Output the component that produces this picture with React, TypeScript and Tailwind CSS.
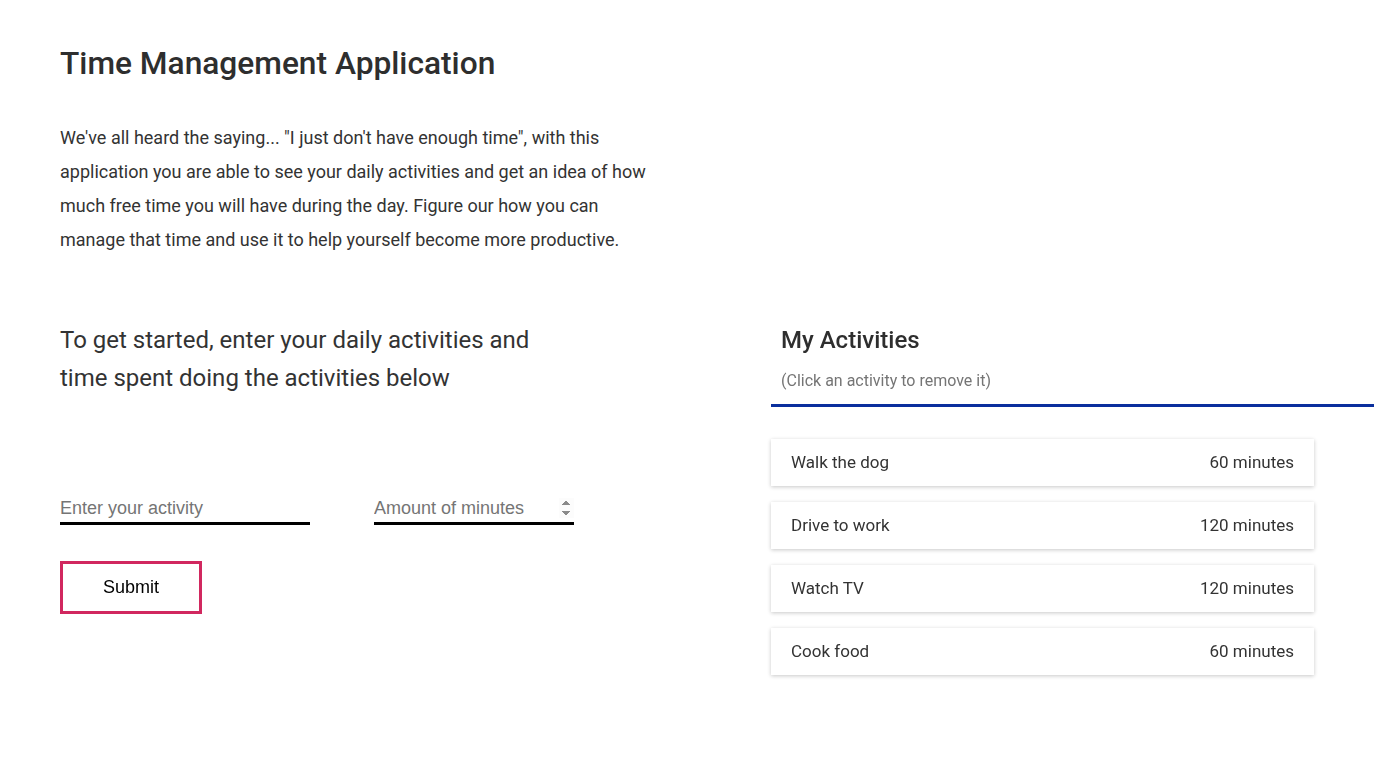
import React, { useState } from "react";

// ── Data ───────────────────────────────────────────────────────────────────────

type Activity = { name: string; minutes: number };

const INITIAL_ACTIVITIES: Activity[] = [
  { name: "Walk the dog", minutes: 60 },
  { name: "Drive to work", minutes: 120 },
  { name: "Watch TV", minutes: 120 },
  { name: "Cook food", minutes: 60 },
];

// ── Sub-components ─────────────────────────────────────────────────────────────

function ActivityCard({ activity, onRemove }: { activity: Activity; onRemove: () => void }) {
  return (
    <div
      onClick={onRemove}
      className="flex items-center justify-between h-[47px] px-5 bg-white cursor-pointer shadow-[0_1px_4px_rgba(0,0,0,0.22)] text-[17px] text-[#333]"
    >
      <span>{activity.name}</span>
      <span>{activity.minutes} minutes</span>
    </div>
  );
}

function ActivityForm() {
  const [name, setName] = useState("");
  const [minutes, setMinutes] = useState("");

  return (
    <div>
      <h2 className="text-[24px] leading-[38px] text-[#333] w-[500px]">
        To get started, enter your daily activities and time spent doing the activities below
      </h2>

      <div className="flex gap-16 mt-[93px] font-['Liberation_Sans',Arial,sans-serif]">
        <input
          type="text"
          value={name}
          onChange={(e) => setName(e.target.value)}
          placeholder="Enter your activity"
          className="w-[250px] h-[35px] pt-1 text-[18px] text-[#333] placeholder:text-[#757575] border-b-[3px] border-black outline-none bg-transparent"
        />
        <input
          type="number"
          autoFocus
          value={minutes}
          onChange={(e) => setMinutes(e.target.value)}
          placeholder="Amount of minutes"
          className="w-[200px] h-[35px] pt-1 text-[18px] text-[#333] placeholder:text-[#757575] border-b-[3px] border-black outline-none bg-transparent"
        />
      </div>

      <button className="mt-9 w-[142px] h-[53px] border-[3px] border-[#d1285f] bg-white text-[18px] text-black font-['Liberation_Sans',Arial,sans-serif]">
        Submit
      </button>
    </div>
  );
}

// ── Main export ────────────────────────────────────────────────────────────────

export default function App() {
  const [activities, setActivities] = useState<Activity[]>(INITIAL_ACTIVITIES);

  return (
    <div className="min-h-screen bg-white px-[60px] pt-[45px] font-['Roboto',sans-serif] text-[#333]">
      <h1 className="text-[31.7px] leading-[38px] font-medium text-[#2e2e2e]">Time Management Application</h1>

      <p className="mt-[38px] w-[600px] text-[18px] leading-[34px] text-[#333]">
        We've all heard the saying... "I just don't have enough time", with this application you are able
        to see your daily activities and get an idea of how much free time you will have during the day.
        Figure our how you can manage that time and use it to help yourself become more productive.
      </p>

      <div className="flex mt-[64px]">
        <div className="w-[711px] shrink-0">
          <ActivityForm />
        </div>

        <div className="w-[603px] shrink-0 pt-[3px]">
          <div className="px-[10px]">
            <h2 className="text-[24px] leading-[32px] font-medium text-[#2e2e2e]">My Activities</h2>
            <p className="mt-[13px] text-[16px] leading-[24px] text-[#757575]">(Click an activity to remove it)</p>
          </div>
          <div className="mt-[11px] h-[3px] bg-[#0a2f9d]" />

          <div className="mt-[32px] w-[543px] flex flex-col gap-4">
            {activities.map((a, i) => (
              <ActivityCard
                key={a.name + i}
                activity={a}
                onRemove={() => setActivities(activities.filter((_, j) => j !== i))}
              />
            ))}
          </div>
        </div>
      </div>
    </div>
  );
}
